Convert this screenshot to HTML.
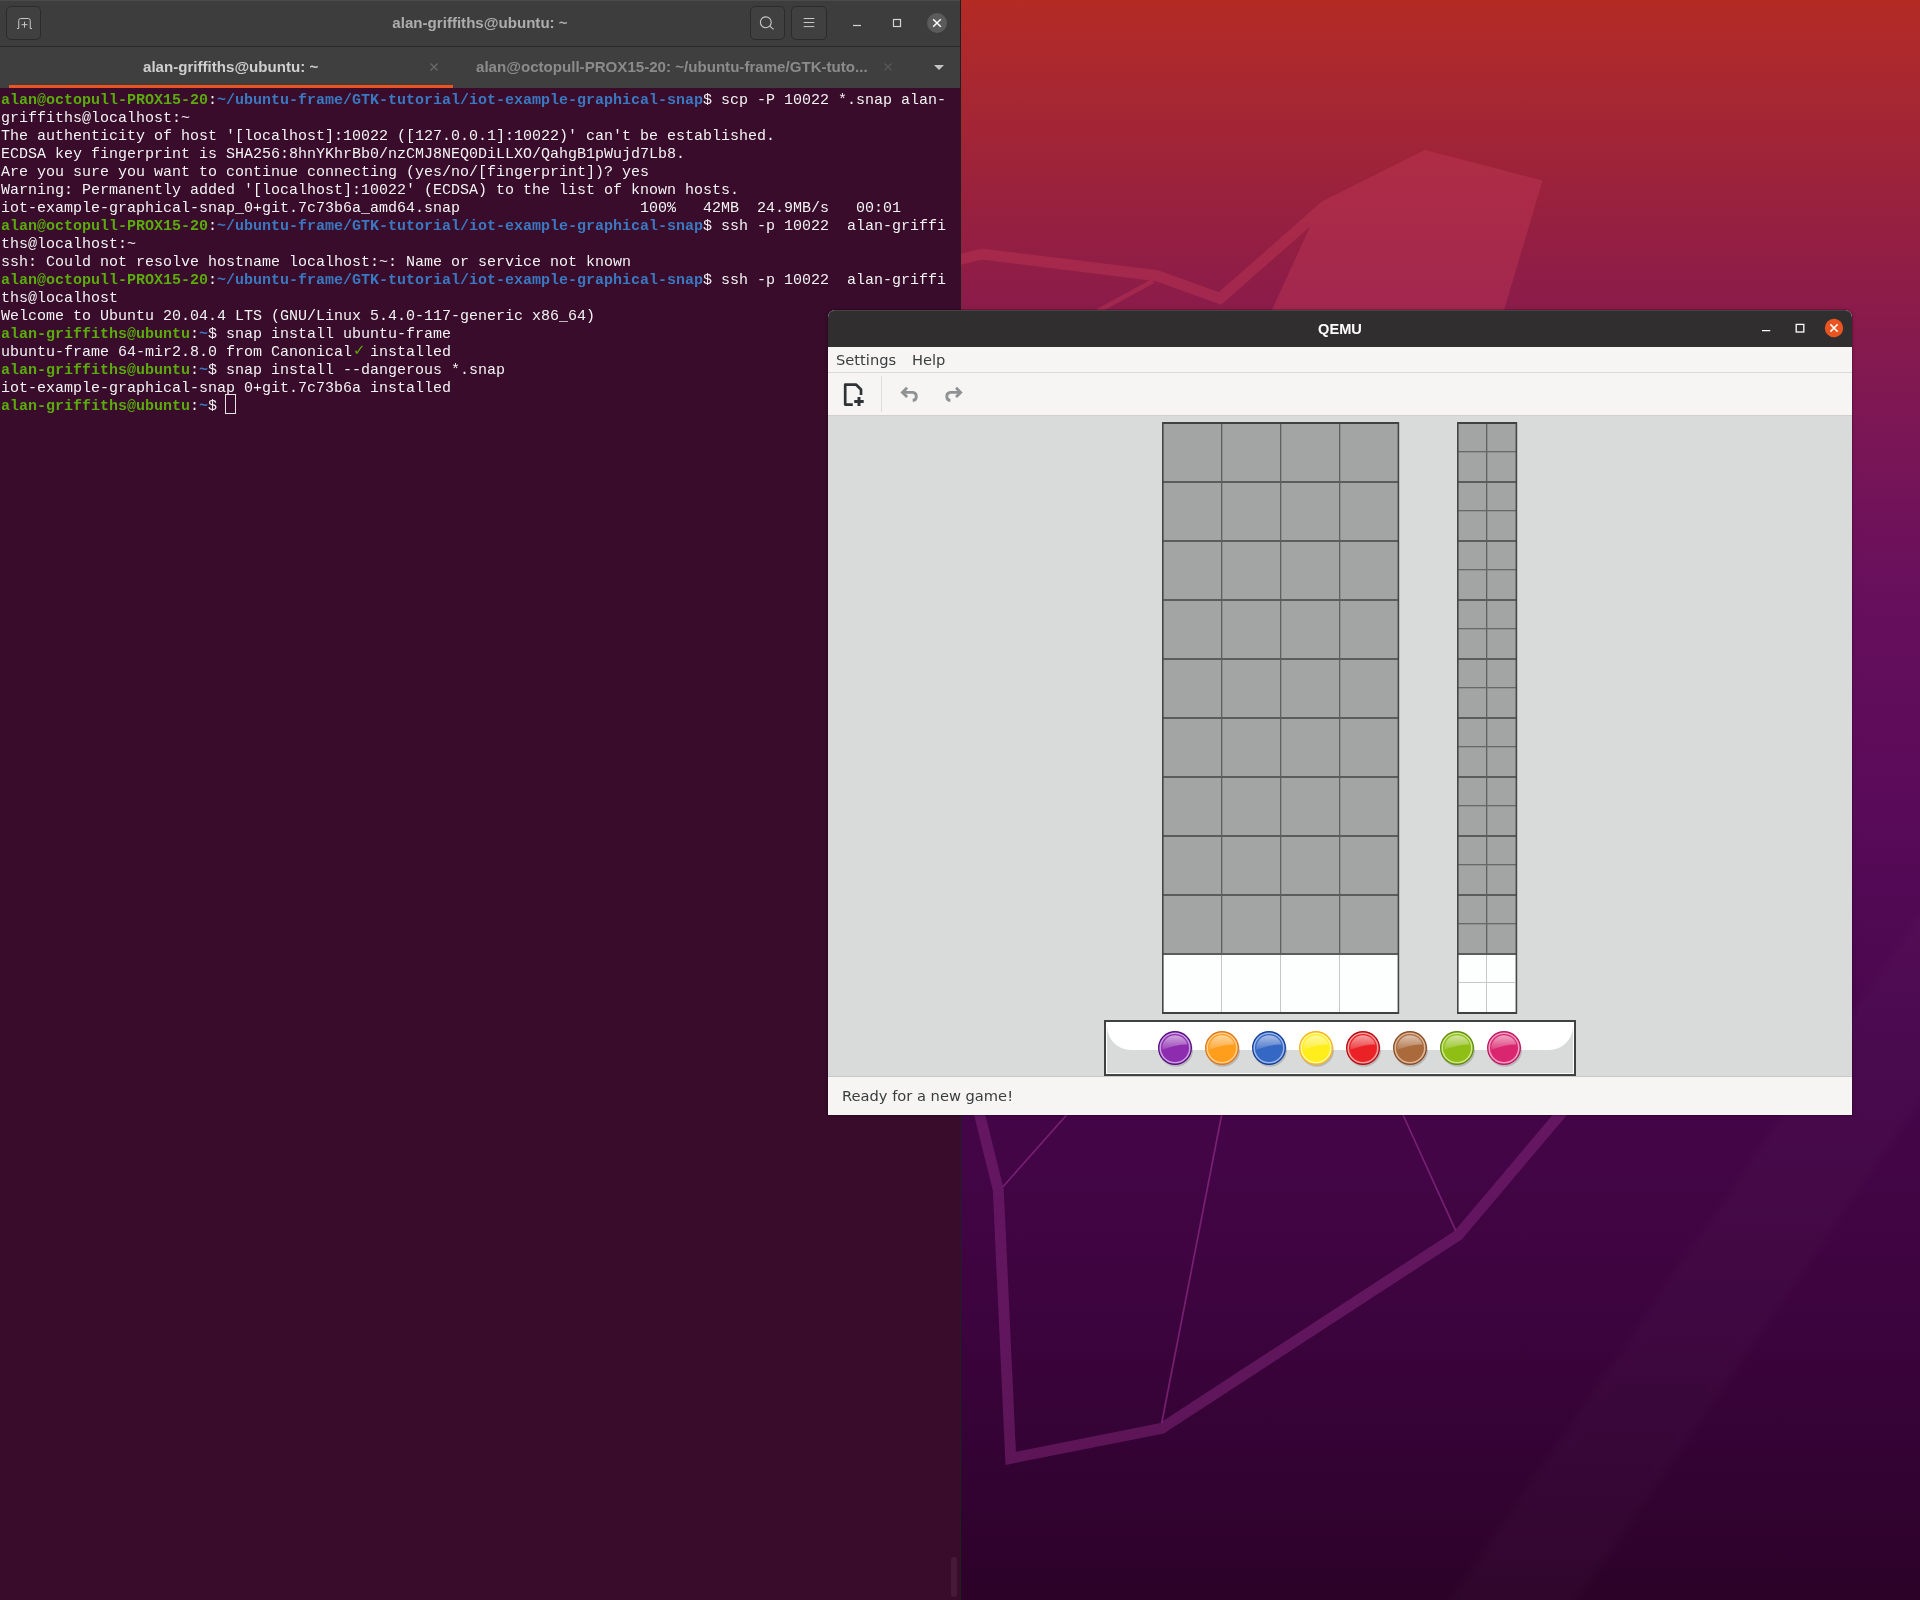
<!DOCTYPE html>
<html lang="en">
<head>
<meta charset="utf-8">
<title>Ubuntu desktop - terminal and QEMU</title>
<style>
*{box-sizing:border-box;margin:0;padding:0}
html,body{width:1920px;height:1600px;overflow:hidden}
body{position:relative;font-family:"Liberation Sans",sans-serif;
 background:linear-gradient(180deg,#b42b24 0.00%,#b22a26 0.62%,#a92830 5.00%,#a02438 9.38%,#962040 13.75%,#8d1c48 18.12%,#831950 22.81%,#7a1656 27.50%,#70125a 32.50%,#670f5c 37.50%,#600d5b 43.75%,#5a0b59 50.00%,#520954 56.25%,#4a074e 62.50%,#430546 71.88%,#3d043f 81.25%,#340334 90.62%,#2c0228 100.00%);}
#wall{position:absolute;left:0;top:0;width:1920px;height:1600px}

/* ---------- terminal window ---------- */
#term{will-change:transform;position:absolute;left:0;top:0;width:961px;height:1600px;background:#380c2a;border-right:1px solid #1f1f1f;overflow:hidden}
#thead{position:absolute;left:0;top:0;width:960px;height:47px;background:#3d3d3d;box-shadow:inset 0 1px 0 #4a4a4a;border-bottom:1px solid #2a2a2a}
#ttitle{position:absolute;left:0;width:960px;top:14px;text-align:center;font-weight:bold;font-size:15.1px;line-height:18px;color:#adadad}
.hbtn{position:absolute;top:6px;height:34px;width:35px;border:1px solid #2b2b2b;border-radius:5px;background:#404040}
.hbtn svg{position:absolute;left:0;top:0}
#tabs{position:absolute;left:0;top:47px;width:960px;height:41px;background:#3f3f3f}
#tabline{position:absolute;left:9px;top:38px;width:444px;height:3px;background:#e95420}
.tab{position:absolute;top:11px;font-weight:bold;font-size:15.1px;line-height:18px;white-space:nowrap}
#tbody{position:absolute;left:1px;top:92px;width:954px;font-family:"Liberation Mono",monospace;font-size:15px;letter-spacing:-0.0015px;line-height:18px;color:#f3f3f3;white-space:pre}
#tbody div{height:18px;position:relative}
.g{color:#5aab0c;font-weight:bold}
.ck{position:absolute;left:352px;top:-3px;color:#5aab0c;font-family:"DejaVu Sans","DejaVu Sans Mono","Liberation Mono",monospace;font-size:15px;letter-spacing:0;line-height:18px}
.b{color:#3a79c2;font-weight:bold}
#cursor{position:absolute;left:225px;top:394px;width:11px;height:20px;border:1px solid #e6e2e6}
#sbar{position:absolute;left:951px;top:1557px;width:6px;height:40px;border-radius:3px;background:#451a38}

/* ---------- QEMU window ---------- */
#qemu{will-change:transform;position:absolute;left:828px;top:310px;width:1024px;height:805px;border-radius:7px 7px 0 0;background:#f6f5f4;
 box-shadow:0 0 0 1px rgba(20,0,20,.22),0 1px 5px 0 rgba(0,0,0,.14);overflow:hidden}
#qtitle{position:absolute;left:0;top:0;width:1024px;height:37px;background:#302e2f;box-shadow:inset 0 1px 0 #454344;border-radius:7px 7px 0 0}
#qtitle .t{position:absolute;left:0;width:1024px;top:10px;text-align:center;font-weight:bold;font-size:14.6px;line-height:18px;color:#fff}
#qmenu{position:absolute;left:0;top:37px;width:1024px;height:26px;background:#f6f5f4;border-bottom:1px solid #dcdad8;
 font-family:"DejaVu Sans","Liberation Sans",sans-serif;font-size:14.67px;color:#3a3d3e}
#qmenu span{position:absolute;top:4px;line-height:18px}
#qtool{position:absolute;left:0;top:63px;width:1024px;height:43px;background:#f6f5f4;border-bottom:1px solid #d4cfcb}
#qcanvas{position:absolute;left:0;top:106px;width:1024px;height:661px;background:#d9dbda}
#qstatus{position:absolute;left:0;top:766px;width:1024px;height:39px;background:#f6f5f4;border-top:1px solid #c9c9c7;
 font-family:"DejaVu Sans","Liberation Sans",sans-serif;font-size:14.67px;color:#3a3d3e}
#qstatus span{position:absolute;left:14px;top:10px;line-height:18px}
</style>
</head>
<body>
<svg id="wall" viewBox="0 0 1920 1600">
 <defs><filter id="bl" x="-20%" y="-20%" width="140%" height="140%"><feGaussianBlur stdDeviation="5"/></filter></defs>
 <polygon points="1930,900 1443,1610 1571,1610 1930,1087" fill="#fff" opacity=".014" filter="url(#bl)"/>
 <g opacity=".4" fill="#c63a58" stroke="#c63a58" stroke-linejoin="miter">
  <polygon points="1425,150 1542.500,180.500 1503.500,312 1271,312 1321.500,201.700" stroke="none"/>
  <path d="M950 262L982 254L1156.700 275.700L1220 298.500L1325.500 205.700" fill="none" stroke-width="11"/>
  <path d="M1153 281L1098 311" fill="none" stroke-width="4.500"/>
 </g>
 <g opacity=".5" fill="none" stroke="#86277c" stroke-linejoin="miter">
  <path d="M978.500 1110L998.300 1190L1010.700 1458.300L1161.700 1428.300L1458.300 1235L1564 1110" stroke-width="11"/>
 </g>
 <path d="M1003 1186.700L1071 1110M1161.700 1423L1222.600 1110M1455.700 1230.700L1400.800 1110" fill="none" stroke="#8a2a82" stroke-width="1.700" opacity=".75"/>
</svg>

<div id="term">
 <div id="thead">
  <div class="hbtn" style="left:6px"><svg width="35" height="34" viewBox="0 0 35 34" fill="none" stroke="#c8c8c8" stroke-width="1"><path d="M10 21.500h1.750v-8a2 2 0 0 1 2-2h7.500a2 2 0 0 1 2 2v8h1.750"/><path d="M17.500 14.700v6M14.500 17.700h6"/></svg></div>
  <div id="ttitle">alan-griffiths@ubuntu: ~</div>
  <div class="hbtn" style="left:750px"><svg width="35" height="34" viewBox="0 0 35 34" fill="none" stroke="#c8c8c8" stroke-width="1.1"><circle cx="14.800" cy="15.300" r="5.400"/><path d="M18.800 19.200l3.800 3.200"/></svg></div>
  <div class="hbtn" style="left:791px;width:36px"><svg width="36" height="34" viewBox="0 0 36 34" fill="none" stroke="#c8c8c8" stroke-width="1"><path d="M11.700 11.500h10.600M11.700 15.500h10.600M11.700 19.600h10.600"/></svg></div>
  <svg style="position:absolute;left:840px;top:4px" width="116" height="38" viewBox="840 5 116 38" fill="none">
   <path d="M853 26.500h8" stroke="#d4d4d4" stroke-width="1.2"/>
   <rect x="893.500" y="20.500" width="7" height="7" stroke="#d4d4d4" stroke-width="1.2"/>
   <circle cx="937" cy="24" r="10" fill="#5b5b5b"/>
   <path d="M933.200 20.200l7.600 7.600M940.800 20.200l-7.600 7.600" stroke="#fff" stroke-width="1.500"/>
  </svg>
 </div>
 <div id="tabs">
  <div class="tab" id="tab1" style="left:143px;color:#cfcfcf">alan-griffiths@ubuntu: ~</div>
  <svg style="position:absolute;left:428px;top:14px" width="12" height="12" viewBox="0 0 12 12"><path d="M2.500 2.500l7 7M9.500 2.500l-7 7" stroke="#6a6a6a" stroke-width="1.200"/></svg>
  <div class="tab" id="tab2" style="left:476px;color:#8b8b8b">alan@octopull-PROX15-20: ~/ubuntu-frame/GTK-tuto...</div>
  <svg style="position:absolute;left:882px;top:14px" width="12" height="12" viewBox="0 0 12 12"><path d="M2.500 2.500l7 7M9.500 2.500l-7 7" stroke="#585858" stroke-width="1.200"/></svg>
  <svg style="position:absolute;left:933px;top:17px" width="12" height="7" viewBox="0 0 12 7"><path d="M1 1h10l-5 5z" fill="#c4c4c4"/></svg>
  <div id="tabline"></div>
 </div>
 <div id="tbody"><div><span class="g">alan@octopull-PROX15-20</span>:<span class="b">~/ubuntu-frame/GTK-tutorial/iot-example-graphical-snap</span>$ scp -P 10022 *.snap alan-</div><div>griffiths@localhost:~</div><div>The authenticity of host '[localhost]:10022 ([127.0.0.1]:10022)' can't be established.</div><div>ECDSA key fingerprint is SHA256:8hnYKhrBb0/nzCMJ8NEQ0DiLLXO/QahgB1pWujd7Lb8.</div><div>Are you sure you want to continue connecting (yes/no/[fingerprint])? yes</div><div>Warning: Permanently added '[localhost]:10022' (ECDSA) to the list of known hosts.</div><div>iot-example-graphical-snap_0+git.7c73b6a_amd64.snap                    100%   42MB  24.9MB/s   00:01</div><div><span class="g">alan@octopull-PROX15-20</span>:<span class="b">~/ubuntu-frame/GTK-tutorial/iot-example-graphical-snap</span>$ ssh -p 10022  alan-griffi</div><div>ths@localhost:~</div><div>ssh: Could not resolve hostname localhost:~: Name or service not known</div><div><span class="g">alan@octopull-PROX15-20</span>:<span class="b">~/ubuntu-frame/GTK-tutorial/iot-example-graphical-snap</span>$ ssh -p 10022  alan-griffi</div><div>ths@localhost</div><div>Welcome to Ubuntu 20.04.4 LTS (GNU/Linux 5.4.0-117-generic x86_64)</div><div><span class="g">alan-griffiths@ubuntu</span>:<span class="b">~</span>$ snap install ubuntu-frame</div><div>ubuntu-frame 64-mir2.8.0 from Canonical  installed<span class="ck">✓</span></div><div><span class="g">alan-griffiths@ubuntu</span>:<span class="b">~</span>$ snap install --dangerous *.snap</div><div>iot-example-graphical-snap 0+git.7c73b6a installed</div><div><span class="g">alan-griffiths@ubuntu</span>:<span class="b">~</span>$ </div></div>
 <div id="cursor"></div>
 <div id="sbar"></div>
</div>

<div id="qemu">
 <div id="qtitle"><div class="t">QEMU</div>
  <svg style="position:absolute;left:920px;top:0" width="104" height="36" viewBox="1748 310 104 36" fill="none">
   <path d="M1762 330.600h8.200" stroke="#fff" stroke-width="1.300"/>
   <rect x="1796.200" y="324.400" width="7.600" height="7.600" stroke="#fff" stroke-width="1.300"/>
   <circle cx="1834" cy="328" r="9.200" fill="#e95420"/>
   <path d="M1830.400 324.400l7.200 7.200M1837.600 324.400l-7.200 7.200" stroke="#fff" stroke-width="1.500"/>
  </svg>
 </div>
 <div id="qmenu"><span style="left:8px">Settings</span><span style="left:84px">Help</span></div>
 <div id="qtool">
  <svg style="position:absolute;left:0;top:0" width="160" height="42" viewBox="828 373 160 42" fill="none">
   <path d="M852.800 404.600H845.200V384.700H856.200L861 389.500V395" stroke="#2e3436" stroke-width="2.700" stroke-linejoin="round"/>
   <path d="M859 397V406M854.200 401.500H863.700" stroke="#2e3436" stroke-width="3"/>
   <path d="M881.500 376V412" stroke="#dedcda" stroke-width="1"/>
   <g stroke="#8f9293" stroke-width="2.800">
    <path d="M907.100 387.700L902.400 392.400L907.100 397.100" stroke-linejoin="miter"/>
    <path d="M903 392.400H913A4.100 4.100 0 0 1 912.700 400.500"/>
    <path d="M956 387.700L960.700 392.400L956 397.100" stroke-linejoin="miter"/>
    <path d="M960.100 392.400H950.100A4.100 4.100 0 0 0 950.400 400.500"/>
   </g>
  </svg>
 </div>
 <div id="qcanvas"><svg width="1024" height="661" viewBox="828 416 1024 661" shape-rendering="crispEdges">
<defs><linearGradient id="gl" x1="0" y1="0" x2="0" y2="1"><stop offset="0" stop-color="#fff" stop-opacity=".58"/><stop offset="1" stop-color="#fff" stop-opacity=".12"/></linearGradient>
</defs>
<rect x="1162" y="422" width="236" height="531" fill="#a3a5a4"/>
<rect x="1162" y="953" width="236" height="59" fill="#fdfefe"/>
<rect x="1457" y="422" width="59" height="531" fill="#a3a5a4"/>
<rect x="1457" y="953" width="59" height="59" fill="#fdfefe"/>
<rect x="1221" y="422" width="1.300" height="531" fill="#5f6161" shape-rendering="auto"/>
<rect x="1221" y="955" width="1" height="57" fill="#c6c8c7"/>
<rect x="1280" y="422" width="1.300" height="531" fill="#5f6161" shape-rendering="auto"/>
<rect x="1280" y="955" width="1" height="57" fill="#c6c8c7"/>
<rect x="1339" y="422" width="1.300" height="531" fill="#5f6161" shape-rendering="auto"/>
<rect x="1339" y="955" width="1" height="57" fill="#c6c8c7"/>
<rect x="1486" y="422" width="1.300" height="531" fill="#5f6161" shape-rendering="auto"/>
<rect x="1486" y="955" width="1" height="57" fill="#c6c8c7"/>
<rect x="1457" y="451" width="59" height="1.300" fill="#676969" shape-rendering="auto"/>
<rect x="1457" y="510" width="59" height="1.300" fill="#676969" shape-rendering="auto"/>
<rect x="1457" y="569" width="59" height="1.300" fill="#676969" shape-rendering="auto"/>
<rect x="1457" y="628" width="59" height="1.300" fill="#676969" shape-rendering="auto"/>
<rect x="1457" y="687" width="59" height="1.300" fill="#676969" shape-rendering="auto"/>
<rect x="1457" y="746" width="59" height="1.300" fill="#676969" shape-rendering="auto"/>
<rect x="1457" y="805" width="59" height="1.300" fill="#676969" shape-rendering="auto"/>
<rect x="1457" y="864" width="59" height="1.300" fill="#676969" shape-rendering="auto"/>
<rect x="1457" y="923" width="59" height="1.300" fill="#676969" shape-rendering="auto"/>
<rect x="1459" y="982" width="56" height="1" fill="#c6c8c7"/>
<rect x="1162" y="481" width="236" height="2" fill="#5b5d5d"/>
<rect x="1457" y="481" width="59" height="2" fill="#5b5d5d"/>
<rect x="1162" y="540" width="236" height="2" fill="#5b5d5d"/>
<rect x="1457" y="540" width="59" height="2" fill="#5b5d5d"/>
<rect x="1162" y="599" width="236" height="2" fill="#5b5d5d"/>
<rect x="1457" y="599" width="59" height="2" fill="#5b5d5d"/>
<rect x="1162" y="658" width="236" height="2" fill="#5b5d5d"/>
<rect x="1457" y="658" width="59" height="2" fill="#5b5d5d"/>
<rect x="1162" y="717" width="236" height="2" fill="#5b5d5d"/>
<rect x="1457" y="717" width="59" height="2" fill="#5b5d5d"/>
<rect x="1162" y="776" width="236" height="2" fill="#5b5d5d"/>
<rect x="1457" y="776" width="59" height="2" fill="#5b5d5d"/>
<rect x="1162" y="835" width="236" height="2" fill="#5b5d5d"/>
<rect x="1457" y="835" width="59" height="2" fill="#5b5d5d"/>
<rect x="1162" y="894" width="236" height="2" fill="#5b5d5d"/>
<rect x="1457" y="894" width="59" height="2" fill="#5b5d5d"/>
<rect x="1162" y="953" width="236" height="2" fill="#5b5d5d"/>
<rect x="1457" y="953" width="59" height="2" fill="#5b5d5d"/>
<rect x="1162" y="422" width="236" height="2" fill="#404242"/>
<rect x="1162" y="1012" width="237" height="2" fill="#404242"/>
<rect x="1162" y="422" width="1.600" height="590" fill="#444646" shape-rendering="auto"/>
<rect x="1397.6" y="422" width="1.600" height="592" fill="#444646" shape-rendering="auto"/>
<rect x="1457" y="422" width="59" height="2" fill="#404242"/>
<rect x="1457" y="1012" width="60" height="2" fill="#404242"/>
<rect x="1457" y="422" width="1.600" height="590" fill="#444646" shape-rendering="auto"/>
<rect x="1515.6" y="422" width="1.600" height="592" fill="#444646" shape-rendering="auto"/>
<rect x="1105" y="1021" width="470" height="54" fill="#d9dbda" stroke="#404242" stroke-width="2"/>
<rect x="1106.5" y="1022.5" width="467" height="51" fill="none" stroke="#fff" stroke-width="1"/>
<path d="M1107 1022H1573V1026A24 24 0 0 1 1549 1050H1131A24 24 0 0 1 1107 1026Z" fill="#fff" shape-rendering="auto"/>
<g shape-rendering="auto">
<ellipse cx="1176" cy="1050.2" rx="17" ry="16.500" fill="#000" opacity=".16"/>
<circle cx="1175" cy="1048" r="17" fill="#5b0c84"/>
<circle cx="1175" cy="1048" r="15.600" fill="#c9a0e0"/>
<circle cx="1175" cy="1048" r="14" fill="#8e2cb0"/>
<path d="M1162.3 1049.8A12.900 12.900 0 0 1 1187.5 1044.6Q1177.0 1044.4 1162.3 1049.8Z" fill="url(#gl)"/>
</g>
<g shape-rendering="auto">
<ellipse cx="1223" cy="1050.2" rx="17" ry="16.500" fill="#000" opacity=".16"/>
<circle cx="1222" cy="1048" r="17" fill="#e0781a"/>
<circle cx="1222" cy="1048" r="15.600" fill="#ffd08a"/>
<circle cx="1222" cy="1048" r="14" fill="#ff9d1c"/>
<path d="M1209.3 1049.8A12.900 12.900 0 0 1 1234.5 1044.6Q1224.0 1044.4 1209.3 1049.8Z" fill="url(#gl)"/>
</g>
<g shape-rendering="auto">
<ellipse cx="1270" cy="1050.2" rx="17" ry="16.500" fill="#000" opacity=".16"/>
<circle cx="1269" cy="1048" r="17" fill="#123f9c"/>
<circle cx="1269" cy="1048" r="15.600" fill="#9ab6ea"/>
<circle cx="1269" cy="1048" r="14" fill="#3567c4"/>
<path d="M1256.3 1049.8A12.900 12.900 0 0 1 1281.5 1044.6Q1271.0 1044.4 1256.3 1049.8Z" fill="url(#gl)"/>
</g>
<g shape-rendering="auto">
<ellipse cx="1317" cy="1050.2" rx="17" ry="16.500" fill="#000" opacity=".16"/>
<circle cx="1316" cy="1048" r="17" fill="#f9b516"/>
<circle cx="1316" cy="1048" r="15.600" fill="#fff8a0"/>
<circle cx="1316" cy="1048" r="14" fill="#ffee1c"/>
<path d="M1303.3 1049.8A12.900 12.900 0 0 1 1328.5 1044.6Q1318.0 1044.4 1303.3 1049.8Z" fill="url(#gl)"/>
</g>
<g shape-rendering="auto">
<ellipse cx="1364" cy="1050.2" rx="17" ry="16.500" fill="#000" opacity=".16"/>
<circle cx="1363" cy="1048" r="17" fill="#b80a10"/>
<circle cx="1363" cy="1048" r="15.600" fill="#f6a0a0"/>
<circle cx="1363" cy="1048" r="14" fill="#ea2225"/>
<path d="M1350.3 1049.8A12.900 12.900 0 0 1 1375.5 1044.6Q1365.0 1044.4 1350.3 1049.8Z" fill="url(#gl)"/>
</g>
<g shape-rendering="auto">
<ellipse cx="1411" cy="1050.2" rx="17" ry="16.500" fill="#000" opacity=".16"/>
<circle cx="1410" cy="1048" r="17" fill="#8a4c22"/>
<circle cx="1410" cy="1048" r="15.600" fill="#dcb89c"/>
<circle cx="1410" cy="1048" r="14" fill="#ab6a3c"/>
<path d="M1397.3 1049.8A12.900 12.900 0 0 1 1422.5 1044.6Q1412.0 1044.4 1397.3 1049.8Z" fill="url(#gl)"/>
</g>
<g shape-rendering="auto">
<ellipse cx="1458" cy="1050.2" rx="17" ry="16.500" fill="#000" opacity=".16"/>
<circle cx="1457" cy="1048" r="17" fill="#5f8f08"/>
<circle cx="1457" cy="1048" r="15.600" fill="#cfe68a"/>
<circle cx="1457" cy="1048" r="14" fill="#8fbf14"/>
<path d="M1444.3 1049.8A12.900 12.900 0 0 1 1469.5 1044.6Q1459.0 1044.4 1444.3 1049.8Z" fill="url(#gl)"/>
</g>
<g shape-rendering="auto">
<ellipse cx="1505" cy="1050.2" rx="17" ry="16.500" fill="#000" opacity=".16"/>
<circle cx="1504" cy="1048" r="17" fill="#c01860"/>
<circle cx="1504" cy="1048" r="15.600" fill="#f2a0c4"/>
<circle cx="1504" cy="1048" r="14" fill="#d9266e"/>
<path d="M1491.3 1049.8A12.900 12.900 0 0 1 1516.5 1044.6Q1506.0 1044.4 1491.3 1049.8Z" fill="url(#gl)"/>
</g>
</svg></div>
 <div id="qstatus"><span>Ready for a new game!</span></div>
</div>
</body>
</html>
